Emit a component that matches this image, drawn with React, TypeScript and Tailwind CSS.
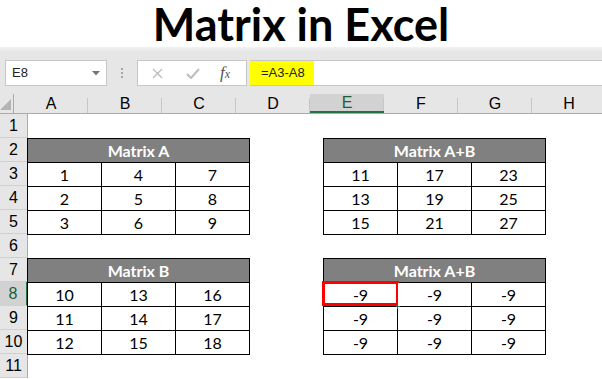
import React from 'react';

const cols = ['A', 'B', 'C', 'D', 'E', 'F', 'G', 'H'];
const rows = [1, 2, 3, 4, 5, 6, 7, 8, 9, 10, 11];

interface MatrixProps {
  title: string;
  values: number[][];
  placement: string;
  selectFirst?: boolean;
}

function Matrix({ title, values, placement, selectFirst = false }: MatrixProps) {
  return (
    <div
      className={`${placement} self-start justify-self-start w-[223px] h-[97px] grid grid-cols-[73px_73px_73px] grid-rows-[23px_23px_23px_23px] gap-px p-px bg-black`}
    >
      <div className="col-span-3 bg-[#808080] flex items-center justify-center text-white font-bold text-[16px] font-['Lato',sans-serif]">
        {title}
      </div>
      {values.flat().map((v, i) => (
        <div
          key={i}
          className="relative bg-white flex items-center justify-center text-[16px] text-black font-['Lato',sans-serif]"
        >
          {v}
          {selectFirst && i === 0 && (
            <>
              <div className="absolute left-[-2px] top-[-2px] w-[77px] h-[25px] border-[3px] border-[#ff0000]" />
              <div className="absolute right-[-3px] bottom-[-3px] w-[4px] h-[4px] bg-[#217346]" />
            </>
          )}
        </div>
      ))}
    </div>
  );
}

export default function App() {
  return (
    <div className="w-[602px] h-[379px] overflow-hidden bg-white font-['Liberation_Sans',Arial,sans-serif]">
      {/* Title */}
      <div className="h-[47px] flex justify-center">
        <h1 className="mt-[1px] h-[46px] text-[45px] leading-[46px] font-bold text-black font-['Lato',sans-serif]">
          Matrix in Excel
        </h1>
      </div>

      {/* Formula bar */}
      <div className="h-[47px] bg-[linear-gradient(#f2f2f2,#e6e6e6_5px)] flex items-start pt-[13px]">
        <div className="ml-[5px] w-[102px] h-[26px] bg-white border border-[#c6c6c6] flex items-center justify-between pl-[6px] pr-[6px]">
          <span className="text-[13px] text-[#222]">E8</span>
          <svg width="8" height="5" viewBox="0 0 8 5">
            <polygon points="0,0 8,0 4,4.5" fill="#777" />
          </svg>
        </div>
        <div className="w-[30px] h-[26px] flex flex-col items-center justify-center gap-[2px]">
          <span className="w-[2px] h-[2px] bg-[#a6a6a6]" />
          <span className="w-[2px] h-[2px] bg-[#a6a6a6]" />
          <span className="w-[2px] h-[2px] bg-[#a6a6a6]" />
        </div>
        <div className="w-[110px] h-[26px] bg-white border border-[#c6c6c6] flex items-center">
          <svg className="ml-[14px]" width="11" height="11" viewBox="0 0 11 11">
            <path d="M1 1 L10 10 M10 1 L1 10" stroke="#bdbdbd" strokeWidth="1.4" />
          </svg>
          <svg className="ml-[23px]" width="14" height="11" viewBox="0 0 14 11">
            <path d="M1 6 L5 10 L13 1" stroke="#bdbdbd" strokeWidth="2" fill="none" />
          </svg>
          <span className="ml-[20px] text-[17px] italic text-[#555] font-['Liberation_Serif',serif]">
            f<span className="text-[12px]">x</span>
          </span>
        </div>
        <div className="ml-[3px] flex-1 h-[26px] bg-white border-y border-[#c6c6c6] flex">
          <div className="w-[64px] h-full bg-[#ffff00] flex items-center pl-[11px] text-[13px] text-[#222]">
            =A3-A8
          </div>
        </div>
      </div>

      {/* Column headers */}
      <div className="h-[20px] flex bg-[#e6e6e6] border-b border-[#ababab]">
        <div className="w-[28px] h-full relative flex items-end justify-end pr-[2px] pb-[3px] border-r border-[#ababab]">
          <svg width="11" height="11" viewBox="0 0 11 11">
            <polygon points="11,0 11,11 0,11" fill="#b4b4b4" />
          </svg>
        </div>
        {cols.map((c) => (
          <div
            key={c}
            className={`w-[74px] shrink-0 h-full relative flex items-center justify-center text-[16px] after:absolute after:right-0 after:top-[4px] after:bottom-0 after:w-px after:bg-[#c6c6c6] ${
              c === 'E' ? 'bg-[#d2d2d2] border-b-2 border-[#217346] text-[#1e5e3a]' : 'text-black'
            }`}
          >
            {c}
          </div>
        ))}
      </div>

      {/* Sheet */}
      <div className="flex">
        <div className="w-[28px] shrink-0 flex flex-col bg-[#e6e6e6] border-r border-[#ababab]">
          {rows.map((r) => (
            <div
              key={r}
              className={`h-[24px] flex items-center justify-center text-[16px] border-b border-[#d0d0d0] ${
                r === 8 ? 'bg-[#d2d2d2] text-[#1e5e3a] border-r-2 border-r-[#217346] -mr-px' : 'text-black'
              }`}
            >
              {r}
            </div>
          ))}
        </div>
        <div className="grid grid-cols-[repeat(8,74px)] grid-rows-[repeat(11,24px)] -ml-px">
          <Matrix
            title="Matrix A"
            placement="col-start-1 col-span-3 row-start-2 row-span-4"
            values={[
              [1, 4, 7],
              [2, 5, 8],
              [3, 6, 9],
            ]}
          />
          <Matrix
            title="Matrix A+B"
            placement="col-start-5 col-span-3 row-start-2 row-span-4"
            values={[
              [11, 17, 23],
              [13, 19, 25],
              [15, 21, 27],
            ]}
          />
          <Matrix
            title="Matrix B"
            placement="col-start-1 col-span-3 row-start-7 row-span-4"
            values={[
              [10, 13, 16],
              [11, 14, 17],
              [12, 15, 18],
            ]}
          />
          <Matrix
            title="Matrix A+B"
            placement="col-start-5 col-span-3 row-start-7 row-span-4"
            selectFirst
            values={[
              [-9, -9, -9],
              [-9, -9, -9],
              [-9, -9, -9],
            ]}
          />
        </div>
      </div>
    </div>
  );
}
